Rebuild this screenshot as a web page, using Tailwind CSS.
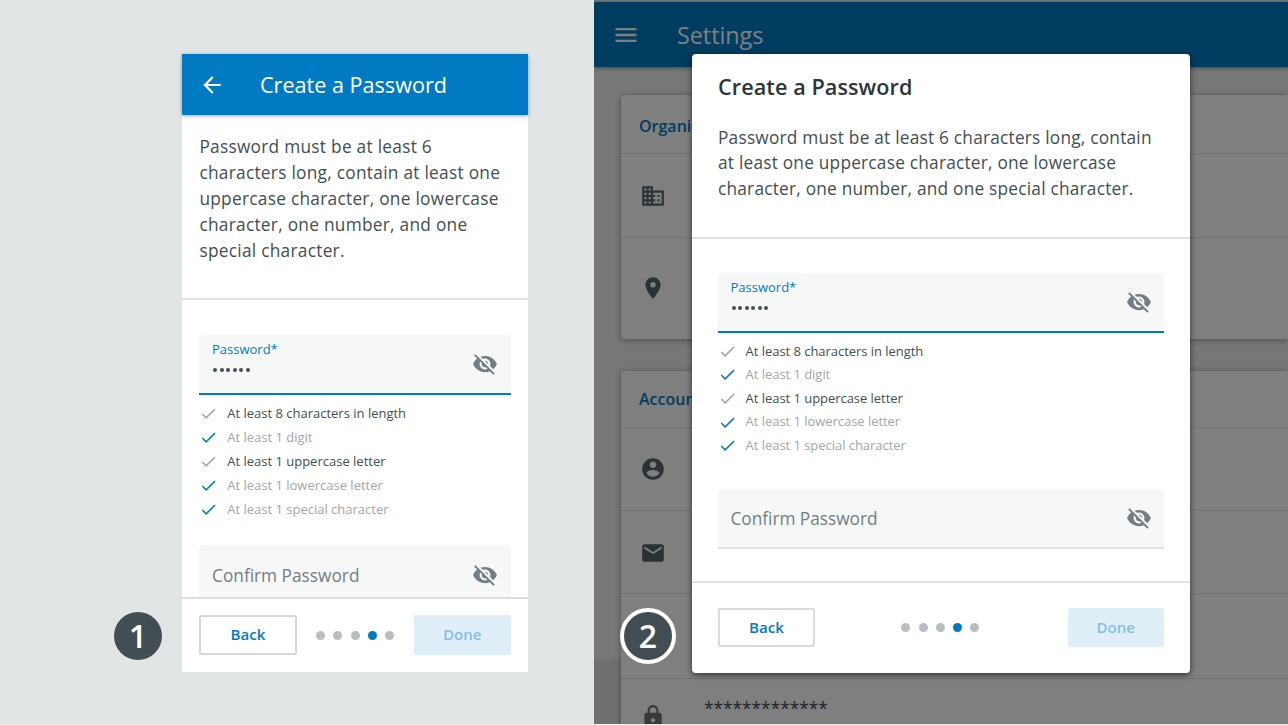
<!DOCTYPE html>
<html lang="en">
<head>
<meta charset="utf-8">
<title>Create a Password</title>
<script src="https://cdn.jsdelivr.net/npm/@tailwindcss/browser@4"></script>
</head>
<body class="w-[1288px] h-[725px] overflow-hidden bg-[#e1e5e6] font-['Open_Sans',sans-serif] text-[#424e54] antialiased">
<svg class="hidden">
  <symbol id="eye-off" viewBox="0 0 24 24"><path d="M12 7c2.76 0 5 2.24 5 5 0 .65-.13 1.26-.36 1.83l2.92 2.92c1.51-1.26 2.7-2.89 3.43-4.75-1.73-4.39-6-7.5-11-7.5-1.4 0-2.74.25-3.98.7l2.16 2.16C10.74 7.13 11.35 7 12 7zM2 4.27l2.28 2.28.46.46C3.08 8.3 1.78 10.02 1 12c1.73 4.39 6 7.5 11 7.5 1.55 0 3.03-.3 4.38-.84l.42.42L19.73 22 21 20.73 3.27 3 2 4.27zM7.53 9.8l1.55 1.55c-.05.21-.08.43-.08.65 0 1.66 1.34 3 3 3 .22 0 .44-.03.65-.08l1.55 1.55c-.67.33-1.41.53-2.2.53-2.76 0-5-2.24-5-5 0-.79.2-1.53.53-2.2zm4.31-.78l3.15 3.15.02-.16c0-1.66-1.34-3-3-3l-.17.01z"/></symbol>
  <symbol id="check" viewBox="0 0 24 24"><path d="M9 16.17L4.83 12l-1.42 1.41L9 19 21 7l-1.41-1.41z"/></symbol>
</svg>
<div class="relative flex w-[1288px] h-[724px] overflow-hidden">

  <!-- Mobile -->
  <section class="flex w-[594px] shrink-0 pl-[114px] pt-[54px]">
    <div class="mt-[558px] flex size-12 shrink-0 items-center justify-center rounded-full bg-[#424e54] text-[32px] leading-none font-semibold text-white">1</div>
    <div class="ml-5 flex h-[618px] w-[346px] flex-col bg-white">
      <header class="z-10 flex h-[61px] shrink-0 items-center bg-[#007bc3] pl-[17px] text-white shadow-[0_1px_4px_rgba(0,0,0,0.35)]">
        <svg class="size-[26px] fill-current" viewBox="0 0 24 24"><path d="M20 11H7.83l5.59-5.59L12 4l-8 8 8 8 1.41-1.41L7.83 13H20v-2z"/></svg>
        <h1 class="ml-[35px] whitespace-nowrap text-[21.6px] leading-[30px]">Create a Password</h1>
      </header>
      <div class="h-[185px] shrink-0 border-b-2 border-[#e0e1e2] pl-[17.4px] pt-[18.6px] text-[17.3px] leading-[26px] tracking-[0.27px] whitespace-nowrap">
        <p>Password must be at least 6<br>characters long, contain at least one<br>uppercase character, one lowercase<br>character, one number, and one<br>special character.</p>
      </div>
      <div class="h-[297px] overflow-hidden px-[17px] pt-[35px]">
        <div class="flex h-[60px] items-center justify-between rounded-t border-b-2 border-[#007bc3] bg-[#f6f8f8] pl-[13px] pr-[13px]">
          <div class="flex h-full flex-col">
            <span class="mt-[5px] text-[13px] leading-[18px] text-[#007bc3]">Password*</span>
            <div class="mt-[10px] flex gap-[2.6px] pl-[1px]"><i class="size-[4px] rounded-full bg-[#424e54]"></i><i class="size-[4px] rounded-full bg-[#424e54]"></i><i class="size-[4px] rounded-full bg-[#424e54]"></i><i class="size-[4px] rounded-full bg-[#424e54]"></i><i class="size-[4px] rounded-full bg-[#424e54]"></i><i class="size-[4px] rounded-full bg-[#424e54]"></i></div>
          </div>
          <svg class="size-[26px] fill-[#727e84]"><use href="#eye-off"/></svg>
        </div>
        <ul class="pt-[6px] text-[13px] leading-[24px] whitespace-nowrap">
          <li class="flex items-center gap-[9.2px]"><svg class="size-[19px] fill-[#9ea6a9]"><use href="#check"/></svg>At least 8 characters in length</li>
          <li class="flex items-center gap-[9.2px] text-[#a0a7aa]"><svg class="size-[19px] fill-[#007bc3]"><use href="#check"/></svg>At least 1 digit</li>
          <li class="flex items-center gap-[9.2px]"><svg class="size-[19px] fill-[#9ea6a9]"><use href="#check"/></svg>At least 1 uppercase letter</li>
          <li class="flex items-center gap-[9.2px] text-[#a0a7aa]"><svg class="size-[19px] fill-[#007bc3]"><use href="#check"/></svg>At least 1 lowercase letter</li>
          <li class="flex items-center gap-[9.2px] text-[#a0a7aa]"><svg class="size-[19px] fill-[#007bc3]"><use href="#check"/></svg>At least 1 special character</li>
        </ul>
        <div class="mt-[24px] flex h-[60px] items-center justify-between rounded-t bg-[#f6f8f8] px-[13px]">
          <span class="pt-[2px] text-[17.3px] text-[#727e84]">Confirm Password</span>
          <svg class="size-[26px] fill-[#727e84]"><use href="#eye-off"/></svg>
        </div>
      </div>
      <footer class="flex h-[75px] shrink-0 items-center justify-between border-t-2 border-[#dcdddd] px-[17px] pb-[1px] text-[15.1px] font-semibold">
        <button class="h-10 w-[98px] rounded-[2px] border-2 border-[#d3d8dc] pb-[2px] text-[#007bc3]">Back</button>
        <div class="flex gap-[8.3px]"><i class="size-[9px] rounded-full bg-[#b8bec1]"></i><i class="size-[9px] rounded-full bg-[#b8bec1]"></i><i class="size-[9px] rounded-full bg-[#b8bec1]"></i><i class="size-[9px] rounded-full bg-[#007bc3]"></i><i class="size-[9px] rounded-full bg-[#b8bec1]"></i></div>
        <button class="h-10 w-[97.5px] rounded-[2px] bg-[#e0eef8] pb-[2px] text-[#85bfe2]">Done</button>
      </footer>
    </div>
  </section>

  <!-- Desktop -->
  <section class="relative h-[724px] w-[694px] overflow-hidden bg-[#ebf0ee]">
    <div class="flex h-full flex-col pt-[2px]">
      <header class="flex h-[65px] shrink-0 items-center bg-[#007bc3] pl-[18.4px] text-white shadow-[0_1px_4px_rgba(0,0,0,0.4)]">
        <svg class="size-[28px] fill-current" viewBox="0 0 24 24"><path d="M3 18h18v-2H3v2zm0-5h18v-2H3v2zm0-7v2h18V6H3z"/></svg>
        <span class="ml-[36.6px] text-[23.3px] leading-[32px]">Settings</span>
      </header>
      <div class="ml-[27px] mt-[28px] h-[244px] shrink-0 rounded-l bg-white shadow-[0_1px_6px_rgba(0,0,0,0.35)]">
        <h2 class="flex h-[59px] items-center border-b border-[#e4e4e4] pl-[18px] pt-[4px] text-[16px] font-semibold text-[#007bc3]">Organi</h2>
        <div class="flex h-[84px] items-center border-b border-[#e4e4e4] pl-[19px]">
          <svg class="size-[26px] fill-[#55656b]" viewBox="0 0 24 24"><path d="M12 7V3H2v18h20V7H12zM6 19H4v-2h2v2zm0-4H4v-2h2v2zm0-4H4V9h2v2zm0-4H4V5h2v2zm4 12H8v-2h2v2zm0-4H8v-2h2v2zm0-4H8V9h2v2zm0-4H8V5h2v2zm10 12h-8v-2h2v-2h-2v-2h2v-2h-2V9h8v10zm-2-8h-2v2h2v-2zm0 4h-2v2h2v-2z"/></svg>
        </div>
        <div class="flex h-[99px] items-center pl-[19px]">
          <svg class="size-[26px] fill-[#55656b]" viewBox="0 0 24 24"><path d="M12 2C8.13 2 5 5.13 5 9c0 5.25 7 13 7 13s7-7.75 7-13c0-3.87-3.13-7-7-7zm0 9.5a2.5 2.5 0 0 1 0-5 2.5 2.5 0 0 1 0 5z"/></svg>
        </div>
      </div>
      <div class="ml-[27px] mt-[32px] h-[400px] shrink-0 rounded-l bg-white shadow-[0_1px_6px_rgba(0,0,0,0.35)]">
        <h2 class="flex h-[57px] items-center border-b border-[#e4e4e4] pl-[18px] text-[16px] font-semibold text-[#007bc3]">Account</h2>
        <div class="flex h-[83px] items-center border-b border-[#e4e4e4] pl-[19px]">
          <svg class="size-[26px] fill-[#55656b]" viewBox="0 0 24 24"><path d="M12 2C6.48 2 2 6.48 2 12s4.48 10 10 10 10-4.48 10-10S17.52 2 12 2zm0 3c1.66 0 3 1.34 3 3s-1.34 3-3 3-3-1.34-3-3 1.34-3 3-3zm0 14.2c-2.5 0-4.71-1.28-6-3.22.03-1.99 4-3.08 6-3.08 1.99 0 5.97 1.09 6 3.08-1.29 1.94-3.5 3.22-6 3.22z"/></svg>
        </div>
        <div class="flex h-[83px] items-center border-b border-[#e4e4e4] pt-[1px] pl-[19px]">
          <svg class="size-[26px] fill-[#55656b]" viewBox="0 0 24 24"><path d="M20 4H4c-1.1 0-1.99.9-1.99 2L2 18c0 1.1.9 2 2 2h16c1.1 0 2-.9 2-2V6c0-1.1-.9-2-2-2zm0 4l-8 5-8-5V6l8 5 8-5v2z"/></svg>
        </div>
        <div class="h-[85px] border-b border-[#e4e4e4]"></div>
        <div class="flex pl-[19px] pt-[25px]">
          <svg class="size-[26px] fill-[#6c757b]" viewBox="0 0 24 24"><path d="M18 8h-1V6c0-2.76-2.24-5-5-5S7 3.24 7 6v2H6c-1.1 0-2 .9-2 2v10c0 1.1.9 2 2 2h12c1.1 0 2-.9 2-2V10c0-1.1-.9-2-2-2zm-6 9c-1.1 0-2-.9-2-2s.9-2 2-2 2 .9 2 2-.9 2-2 2zm3.1-9H8.9V6c0-1.71 1.39-3.1 3.1-3.1 1.71 0 3.1 1.39 3.1 3.1v2z"/></svg>
          <span class="-mt-[8px] ml-[38px] text-[17.3px] leading-[26px]">*************</span>
        </div>
      </div>
    </div>
    <div class="absolute inset-0 bg-black/50"></div>
    <div class="absolute top-[659px] left-0 h-[65px] w-[27px] bg-black/5"></div>

    <!-- Dialog -->
    <div class="absolute left-[98px] top-[53.5px] flex h-[619px] w-[498px] flex-col rounded bg-white shadow-[0_2px_6px_rgba(0,0,0,0.6)]">
      <div class="h-[185.5px] shrink-0 border-b-2 border-[#e0e1e2] pl-[26px] pt-[18px] whitespace-nowrap">
        <h1 class="text-[21.6px] leading-[30px] font-semibold tracking-[0.08px] text-[#2b353a]">Create a Password</h1>
        <p class="mt-[23px] text-[17.3px] leading-[25.7px] tracking-[0.215px]">Password must be at least 6 characters long, contain<br>at least one uppercase character, one lowercase<br>character, one number, and one special character.</p>
      </div>
      <div class="h-[342px] px-[26px] pt-[34px]">
        <div class="flex h-[60px] items-center justify-between rounded-t border-b-2 border-[#007bc3] bg-[#f6f8f8] pl-[12.5px] pr-[12.5px]">
          <div class="flex h-full flex-col">
            <span class="mt-[5px] text-[13px] leading-[18px] text-[#007bc3]">Password*</span>
            <div class="mt-[9.5px] flex gap-[2.5px] pl-[1px]"><i class="size-[4px] rounded-full bg-[#424e54]"></i><i class="size-[4px] rounded-full bg-[#424e54]"></i><i class="size-[4px] rounded-full bg-[#424e54]"></i><i class="size-[4px] rounded-full bg-[#424e54]"></i><i class="size-[4px] rounded-full bg-[#424e54]"></i><i class="size-[4px] rounded-full bg-[#424e54]"></i></div>
          </div>
          <svg class="size-[26px] fill-[#727e84]"><use href="#eye-off"/></svg>
        </div>
        <ul class="pt-[6.5px] text-[13px] leading-[23.6px] tracking-[-0.04px] whitespace-nowrap">
          <li class="flex items-center gap-[8.6px]"><svg class="size-[19px] fill-[#9ea6a9]"><use href="#check"/></svg>At least 8 characters in length</li>
          <li class="flex items-center gap-[8.6px] text-[#a0a7aa]"><svg class="size-[19px] fill-[#007bc3]"><use href="#check"/></svg>At least 1 digit</li>
          <li class="flex items-center gap-[8.6px]"><svg class="size-[19px] fill-[#9ea6a9]"><use href="#check"/></svg>At least 1 uppercase letter</li>
          <li class="flex items-center gap-[8.6px] text-[#a0a7aa]"><svg class="size-[19px] fill-[#007bc3]"><use href="#check"/></svg>At least 1 lowercase letter</li>
          <li class="flex items-center gap-[8.6px] text-[#a0a7aa]"><svg class="size-[19px] fill-[#007bc3]"><use href="#check"/></svg>At least 1 special character</li>
        </ul>
        <div class="mt-[31.5px] flex h-[60px] items-center justify-between rounded-t border-b-2 border-[#dfe2e3] bg-[#f6f8f8] px-[12.5px]">
          <span class="pt-[2px] text-[17.3px] tracking-[-0.03px] text-[#727e84]">Confirm Password</span>
          <svg class="size-[26px] fill-[#727e84]"><use href="#eye-off"/></svg>
        </div>
      </div>
      <footer class="flex flex-1 items-center justify-between border-t-2 border-[#e0e1e2] px-[26px] text-[15.1px] font-semibold">
        <button class="h-[39px] w-[97px] rounded-[2px] border-2 border-[#d8dcde] text-[#007bc3]">Back</button>
        <div class="-ml-[2px] flex gap-[8.2px]"><i class="size-[9px] rounded-full bg-[#b8bec1]"></i><i class="size-[9px] rounded-full bg-[#b8bec1]"></i><i class="size-[9px] rounded-full bg-[#b8bec1]"></i><i class="size-[9px] rounded-full bg-[#007bc3]"></i><i class="size-[9px] rounded-full bg-[#b8bec1]"></i></div>
        <button class="h-[39px] w-[96.5px] rounded-[2px] bg-[#e0eef8] text-[#85bfe2]">Done</button>
      </footer>
    </div>
    <div class="absolute left-[26px] top-[608px] flex size-14 items-center justify-center rounded-full border-4 border-white bg-[#424e54] text-[32px] leading-none font-semibold text-white">2</div>
  </section>
</div>
<div class="h-px w-full bg-[#f0f2f2]"></div>
</body>
</html>
